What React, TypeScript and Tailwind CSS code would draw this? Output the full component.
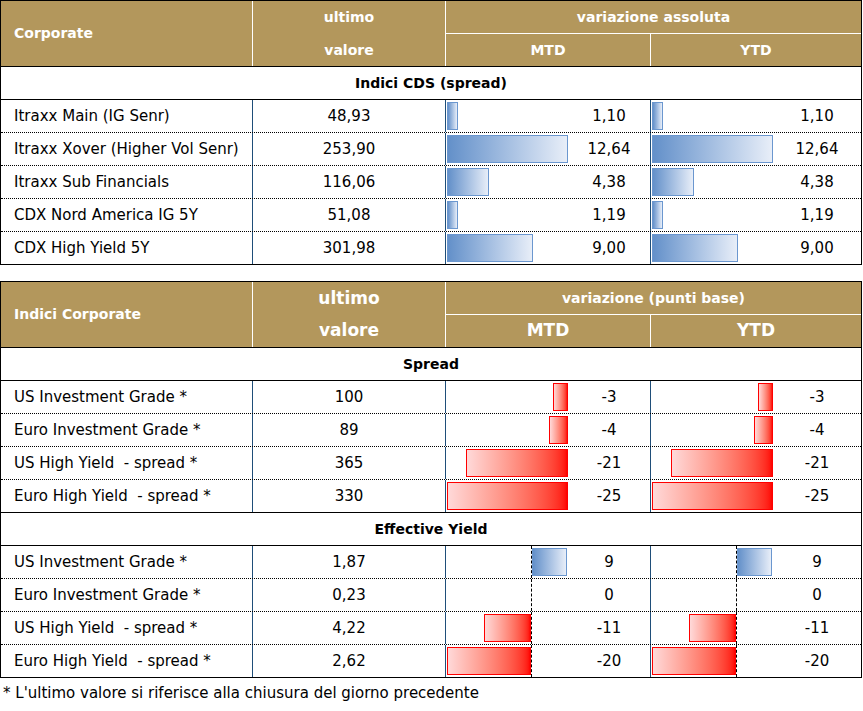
import React from "react";

type Row = { label: string; value: string; mtd: number; ytd: number; mtdText: string; ytdText: string };

const cds: Row[] = [
  { label: "Itraxx Main (IG Senr)", value: "48,93", mtd: 1.1, ytd: 1.1, mtdText: "1,10", ytdText: "1,10" },
  { label: "Itraxx Xover (Higher Vol Senr)", value: "253,90", mtd: 12.64, ytd: 12.64, mtdText: "12,64", ytdText: "12,64" },
  { label: "Itraxx Sub Financials", value: "116,06", mtd: 4.38, ytd: 4.38, mtdText: "4,38", ytdText: "4,38" },
  { label: "CDX Nord America IG 5Y", value: "51,08", mtd: 1.19, ytd: 1.19, mtdText: "1,19", ytdText: "1,19" },
  { label: "CDX High Yield 5Y", value: "301,98", mtd: 9.0, ytd: 9.0, mtdText: "9,00", ytdText: "9,00" },
];

const spread: Row[] = [
  { label: "US Investment Grade *", value: "100", mtd: -3, ytd: -3, mtdText: "-3", ytdText: "-3" },
  { label: "Euro Investment Grade *", value: "89", mtd: -4, ytd: -4, mtdText: "-4", ytdText: "-4" },
  { label: "US High Yield  - spread *", value: "365", mtd: -21, ytd: -21, mtdText: "-21", ytdText: "-21" },
  { label: "Euro High Yield  - spread *", value: "330", mtd: -25, ytd: -25, mtdText: "-25", ytdText: "-25" },
];

const yields: Row[] = [
  { label: "US Investment Grade *", value: "1,87", mtd: 9, ytd: 9, mtdText: "9", ytdText: "9" },
  { label: "Euro Investment Grade *", value: "0,23", mtd: 0, ytd: 0, mtdText: "0", ytdText: "0" },
  { label: "US High Yield  - spread *", value: "4,22", mtd: -11, ytd: -11, mtdText: "-11", ytdText: "-11" },
  { label: "Euro High Yield  - spread *", value: "2,62", mtd: -20, ytd: -20, mtdText: "-20", ytdText: "-20" },
];

// scale: zero = px offset of axis inside the 121px bar area, neg/pos = px per unit
type Scale = { zero: number; neg: number; pos: number; dashed?: boolean };

function Bar({ v, scale }: { v: number; scale: Scale }) {
  const w = v < 0 ? Math.round(-v * scale.neg) : Math.round(v * scale.pos);
  return (
    <div className="flex h-full w-[121px] ml-[1px]">
      {/* negative side */}
      <div
        className={`flex h-full items-center justify-end ${scale.dashed ? "border-r border-dashed border-black" : ""}`}
        style={{ width: scale.zero }}
      >
        {v < 0 && (
          <div
            className="h-[28px] border border-[#ff0000] bg-gradient-to-r from-[#ffd9d9] to-[#ff0000]"
            style={{ width: w }}
          />
        )}
      </div>
      {/* positive side */}
      <div className="flex h-full flex-1 items-center">
        {v > 0 && (
          <div
            className="h-[28px] border border-[#6b97cf] bg-gradient-to-r from-[#6390c9] to-[#e8eef8]"
            style={{ width: w }}
          />
        )}
      </div>
    </div>
  );
}

function DataRow({ row, scale, last }: { row: Row; scale: Scale; last: boolean }) {
  return (
    <div className={`flex ${last ? "h-[32px]" : "h-[33px] border-b border-dotted border-black"}`}>
      <div className="w-[251px] flex items-center pl-[13px] whitespace-pre">{row.label}</div>
      <div className="w-[193px] border-l border-[#1f4e79] flex items-center justify-center">{row.value}</div>
      <div className="w-[205px] border-l border-[#1f4e79] flex items-center">
        <Bar v={row.mtd} scale={scale} />
        <div className="flex-1 text-center">{row.mtdText}</div>
      </div>
      <div className="w-[211px] border-l border-[#1f4e79] flex items-center">
        <Bar v={row.ytd} scale={scale} />
        <div className="flex-1 text-center">{row.ytdText}</div>
      </div>
    </div>
  );
}

function Header({ title, group, big }: { title: string; group: string; big?: boolean }) {
  const sub = big ? "text-[17px]" : "";
  return (
    <div className="flex h-[66px] bg-[#b3975c] text-white text-[14px] font-bold border-b border-black">
      <div className="w-[251px] flex items-center pl-[13px]">{title}</div>
      <div className={`w-[193px] border-l border-white flex flex-col ${sub}`}>
        <div className="h-[33px] flex items-center justify-center">ultimo</div>
        <div className="h-[32px] flex items-center justify-center">valore</div>
      </div>
      <div className="w-[416px] border-l border-white flex flex-col">
        <div className="h-[33px] border-b border-white flex items-center justify-center">{group}</div>
        <div className={`h-[32px] flex ${sub}`}>
          <div className="w-[204px] flex items-center justify-center">MTD</div>
          <div className="flex-1 border-l border-white flex items-center justify-center">YTD</div>
        </div>
      </div>
    </div>
  );
}

function Section({ title }: { title: string }) {
  return (
    <div className="h-[33px] border-b border-black flex items-center justify-center font-bold text-[14px]">
      {title}
    </div>
  );
}

export default function App() {
  const cdsScale: Scale = { zero: 0, neg: 0, pos: 121 / 12.64 };
  const spreadScale: Scale = { zero: 121, neg: 121 / 25, pos: 0 };
  const yieldScale: Scale = { zero: 85, neg: 85 / 20, pos: 35 / 9, dashed: true };

  return (
    <div className="w-[863px] h-[711px] bg-white text-black text-[15px] font-['DejaVu_Sans',sans-serif]">
      <div className="w-[862px] border border-black">
        <Header title="Corporate" group="variazione assoluta" />
        <Section title="Indici CDS (spread)" />
        {cds.map((r, i) => (
          <DataRow key={r.label} row={r} scale={cdsScale} last={i === cds.length - 1} />
        ))}
      </div>

      <div className="w-[862px] border border-black mt-[16px]">
        <Header title="Indici Corporate" group="variazione (punti base)" big />
        <Section title="Spread" />
        {spread.map((r, i) => (
          <div key={r.label} className={i === spread.length - 1 ? "border-b border-black" : ""}>
            <DataRow row={r} scale={spreadScale} last={i === spread.length - 1} />
          </div>
        ))}
        <Section title="Effective Yield" />
        {yields.map((r, i) => (
          <DataRow key={r.label} row={r} scale={yieldScale} last={i === yields.length - 1} />
        ))}
      </div>

      <p className="mt-[4px] pl-[3px]">* L'ultimo valore si riferisce alla chiusura del giorno precedente</p>
    </div>
  );
}
